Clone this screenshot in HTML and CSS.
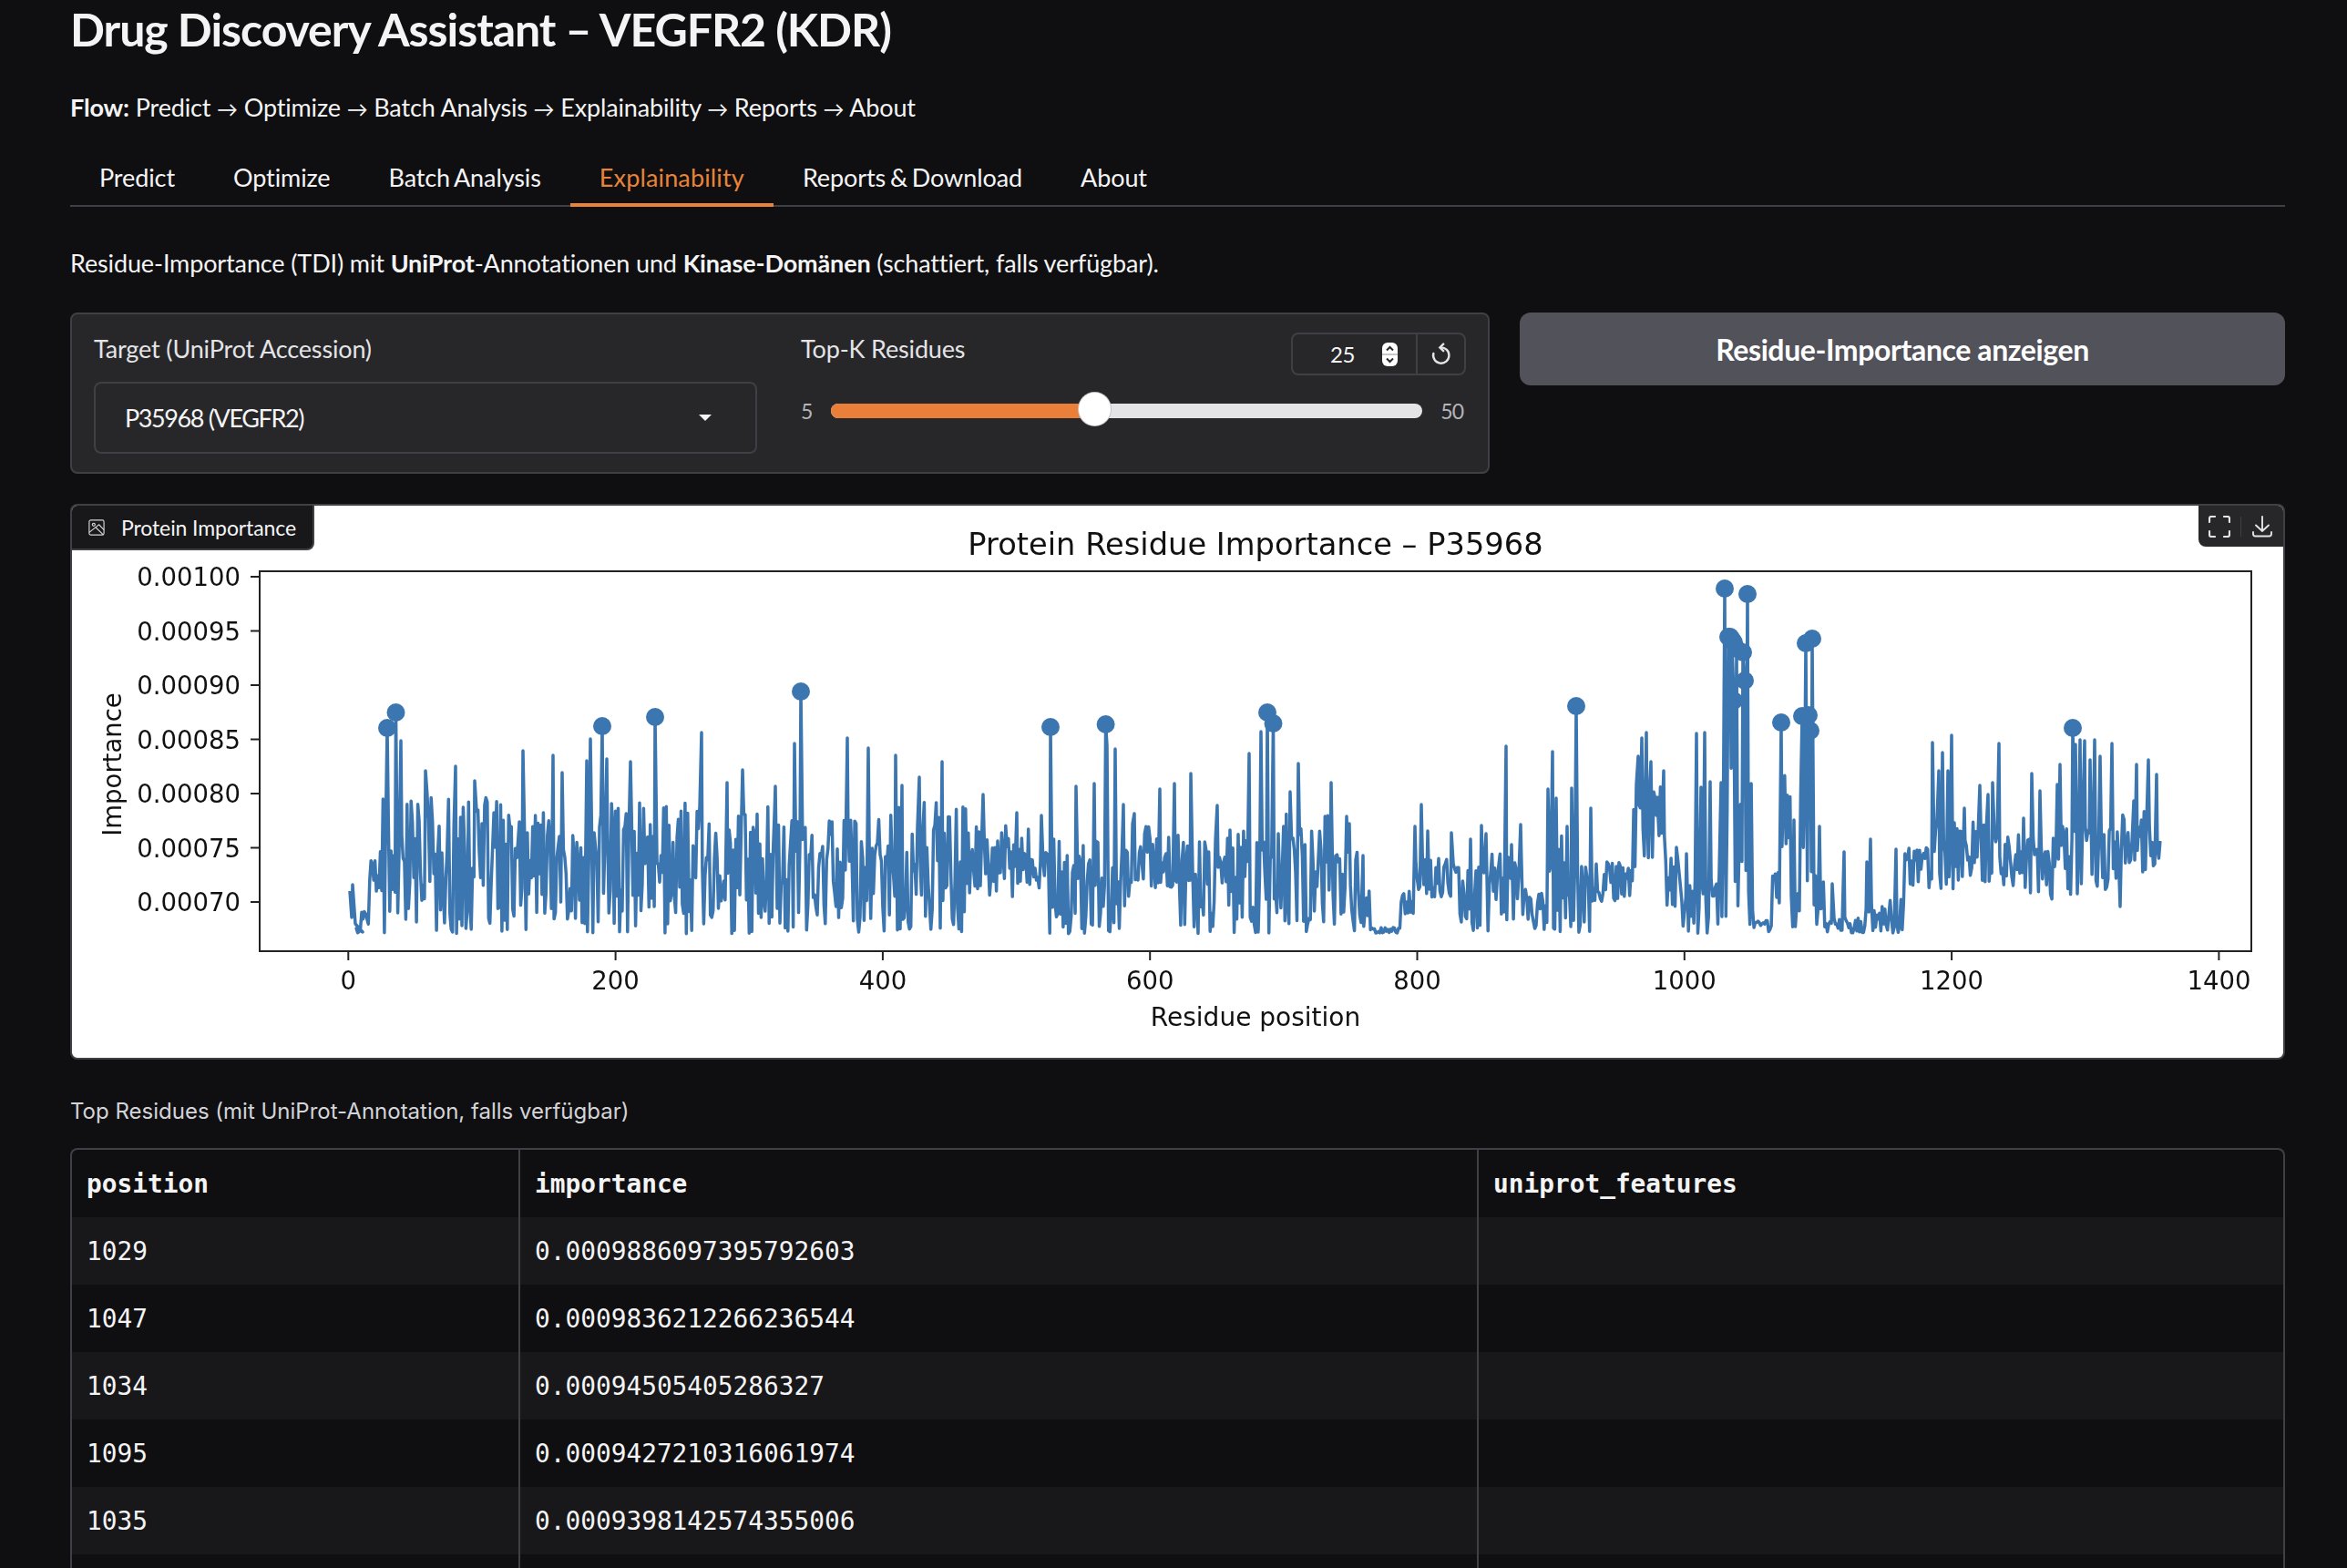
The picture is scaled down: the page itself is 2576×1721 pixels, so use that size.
FILE: index.html
```html
<!DOCTYPE html>
<html lang="en">
<head>
    <meta charset="UTF-8">
    <title>Drug Discovery Assistant</title>
    <link rel="stylesheet" href="styles.css">
</head>
<body>
    <div class="container">
        <h1>Drug Discovery Assistant – VEGFR2 (KDR)</h1>
        <p class="flow"><strong>Flow:</strong> Predict <span class="arrow">→</span> Optimize <span class="arrow">→</span> Batch Analysis <span class="arrow">→</span> Explainability <span class="arrow">→</span> Reports <span class="arrow">→</span> About</p>

        <nav class="tabs">
            <span class="tab">Predict</span>
            <span class="tab">Optimize</span>
            <span class="tab">Batch Analysis</span>
            <span class="tab selected">Explainability</span>
            <span class="tab">Reports &amp; Download</span>
            <span class="tab">About</span>
        </nav>

        <p class="intro">Residue-Importance (TDI) mit <strong>UniProt</strong>-Annotationen und <strong>Kinase-Domänen</strong> (schattiert, falls verfügbar).</p>

        <div class="controls">
            <div class="panel">
                <div class="field target-field">
                    <span class="field-label">Target (UniProt Accession)</span>
                    <div class="select">
                        <span>P35968 (VEGFR2)</span>
                        <span class="caret"></span>
                    </div>
                </div>
                <div class="field topk-field">
                    <div class="topk-head">
                        <span class="field-label">Top-K Residues</span>
                        <div class="number-box">
                            <span class="number-value">25</span>
                            <span class="spinner">
                                <svg viewBox="0 0 17 26" width="17" height="26">
                                    <rect x="0" y="0" width="17" height="26" rx="6" fill="#fff"/>
                                    <rect x="0" y="12" width="17" height="2" fill="#c8c8cc"/>
                                    <path d="M5 8.5 L8.5 5 L12 8.5 M5 17.5 L8.5 21 L12 17.5" fill="none" stroke="#27272a" stroke-width="2"/>
                                </svg>
                            </span>
                            <span class="reset">
                                <svg viewBox="0 0 24 24" width="26" height="26" fill="none" stroke="#e4e4e7" stroke-width="2.2" stroke-linecap="round">
                                    <path d="M11 5 A8 8 0 1 1 4 11"/>
                                    <path d="M14 1.5 L10.5 5 L14 8.5"/>
                                </svg>
                            </span>
                        </div>
                    </div>
                    <div class="slider-row">
                        <span class="slider-end">5</span>
                        <div class="slider">
                            <div class="slider-fill" style="width: 44.6%"></div>
                            <div class="slider-thumb" style="left: 44.6%"></div>
                        </div>
                        <span class="slider-end slider-max">50</span>
                    </div>
                </div>
            </div>
            <button class="primary">Residue-Importance anzeigen</button>
        </div>

        <div class="plot-card">
            <div class="plot-label">
                <svg viewBox="0 0 20 20" width="18" height="18" fill="none" stroke="#d4d4d8" stroke-width="1.3">
                    <rect x="1" y="1" width="18" height="18" rx="2"/>
                    <circle cx="6.5" cy="6.5" r="1.7"/>
                    <path d="M1 16 L13 6.5 L19 13 M9 10 L18.5 19"/>
                </svg>
                <span>Protein Importance</span>
            </div>
            <div class="plot-tools">
                <span class="tool">
                    <svg viewBox="0 0 24 24" width="24" height="24" fill="none" stroke="#e4e4e7" stroke-width="2.2" stroke-linecap="round">
                        <path d="M7 1 H3 Q1 1 1 3 V7 M17 1 H21 Q23 1 23 3 V7 M7 23 H3 Q1 23 1 21 V17 M17 23 H21 Q23 23 23 21 V17"/>
                    </svg>
                </span>
                <span class="tool-divider"></span>
                <span class="tool">
                    <svg viewBox="0 0 24 24" width="24" height="24" fill="none" stroke="#e4e4e7" stroke-width="1.9" stroke-linecap="round">
                        <path d="M12 1 V17 M5 10.5 L12 17 L19 10.5 M2 18 V20 Q2 22.5 4.5 22.5 H19.5 Q22 22.5 22 20 V18"/>
                    </svg>
                </span>
            </div>
            <svg id="chart" class="chart" viewBox="79 555 2426 606"></svg>
        </div>

        <p class="table-title">Top Residues (mit UniProt-Annotation, falls verfügbar)</p>

        <div class="table-wrap">
            <table>
                <thead>
                    <tr>
                        <th class="col-pos">position</th>
                        <th class="col-imp">importance</th>
                        <th>uniprot_features</th>
                    </tr>
                </thead>
                <tbody>
                    <tr><td>1029</td><td>0.0009886097395792603</td><td></td></tr>
                    <tr><td>1047</td><td>0.0009836212266236544</td><td></td></tr>
                    <tr><td>1034</td><td>0.00094505405286327</td><td></td></tr>
                    <tr><td>1095</td><td>0.0009427210316061974</td><td></td></tr>
                    <tr><td>1035</td><td>0.0009398142574355006</td><td></td></tr>
                    <tr><td>&nbsp;</td><td></td><td></td></tr>
                </tbody>
            </table>
        </div>
    </div>

    <script src="chart.js"></script>
</body>
</html>
```

FILE: styles.css
```css
html, body {
    height: 1721px;
    overflow: hidden;
}

body {
    margin: 0;
    background-color: #0f0f11;
    color: #f4f4f5;
    font-family: 'Lato', 'Noto Sans', sans-serif;
}

.container {
    padding: 0 68px 0 77px;
}

h1 {
    margin: 0;
    padding-top: 2px;
    height: 61px;
    font-size: 50px;
    line-height: 60px;
    font-weight: 700;
    letter-spacing: -1.03px;
}

.flow {
    margin: 38px 0 0;
    height: 34px;
    font-size: 27px;
    line-height: 34px;
    letter-spacing: -0.15px;
}

.arrow {
    font-size: 23px;
    line-height: 0;
}

strong {
    font-weight: 700;
}

.tabs {
    display: flex;
    margin-top: 41px;
    height: 49px;
    border-bottom: 2px solid #3f3f46;
}

.tab {
    padding: 0 32px;
    font-size: 27px;
    line-height: 38px;
    letter-spacing: -0.1px;
    word-spacing: -2px;
    height: 46px;
    box-sizing: border-box;
}

.tab.selected {
    color: #e8833a;
    border-bottom: 4px solid #e8833a;
    height: 51px;
    letter-spacing: 0.15px;
}

.intro {
    margin: 45px 0 0;
    font-size: 27px;
    line-height: 34px;
    letter-spacing: -0.13px;
}

.controls {
    display: flex;
    align-items: flex-start;
    gap: 33px;
    margin-top: 37px;
}

.panel {
    display: flex;
    width: 1558px;
    height: 177px;
    box-sizing: border-box;
    background-color: #27272a;
    border: 2px solid #3f3f46;
    border-radius: 8px;
    padding: 20px 24px 0 24px;
    gap: 48px;
}

.field {
    display: flex;
    flex-direction: column;
}

.target-field {
    width: 728px;
}

.topk-field {
    flex: 1;
}

.field-label {
    font-size: 27px;
    line-height: 36px;
    letter-spacing: -0.15px;
    color: #e4e4e7;
}

.select {
    display: flex;
    align-items: center;
    justify-content: space-between;
    margin-top: 18px;
    height: 79px;
    box-sizing: border-box;
    border: 2px solid #3f3f46;
    border-radius: 8px;
    padding: 0 48px 0 32px;
    font-size: 27px;
    letter-spacing: -1.4px;
}

.caret {
    width: 0;
    height: 0;
    border-left: 7px solid transparent;
    border-right: 7px solid transparent;
    border-top: 7px solid #f4f4f5;
}

.topk-head {
    display: flex;
    justify-content: space-between;
    align-items: flex-start;
}

.number-box {
    display: flex;
    align-items: center;
    width: 192px;
    height: 47px;
    box-sizing: border-box;
    border: 2px solid #3f3f46;
    border-radius: 8px;
}

.number-value {
    width: 68px;
    text-align: right;
    font-size: 24px;
    letter-spacing: -0.4px;
}

.spinner {
    display: flex;
    margin-left: 30px;
    width: 37px;
}

.reset {
    display: flex;
    align-items: center;
    justify-content: center;
    flex: 1;
    height: 100%;
    border-left: 2px solid #3f3f46;
}

.slider-row {
    display: flex;
    align-items: center;
    gap: 20px;
    margin-top: 25px;
}

.slider-end {
    font-size: 23px;
    color: #b4b4bb;
}

.slider-max {
    margin-right: 3px;
    letter-spacing: -1px;
}

.slider {
    position: relative;
    flex: 1;
    height: 16px;
    border-radius: 8px;
    background-color: #e4e4e7;
}

.slider-fill {
    height: 100%;
    border-radius: 8px 0 0 8px;
    background-color: #e97f38;
}

.slider-thumb {
    position: absolute;
    top: -12px;
    width: 35px;
    height: 36px;
    margin-left: -18px;
    border-radius: 50%;
    background-color: #fff;
    box-shadow: 0 0 0 1px #c4c4c8;
}

.primary {
    flex: 1;
    height: 80px;
    border: none;
    border-radius: 12px;
    background-color: #52525b;
    color: #fff;
    font-family: inherit;
    font-size: 32px;
    font-weight: 700;
    letter-spacing: -0.4px;
}

.plot-card {
    position: relative;
    margin-top: 33px;
    height: 610px;
    box-sizing: border-box;
    background-color: #fff;
    border: 2px solid #3f3f46;
    border-radius: 8px;
    overflow: hidden;
}

.plot-label {
    position: absolute;
    top: 0;
    left: 0;
    display: flex;
    align-items: center;
    gap: 18px;
    width: 266px;
    height: 49px;
    box-sizing: border-box;
    padding-left: 18px;
    background-color: #18181b;
    border-right: 2px solid #3f3f46;
    border-bottom: 2px solid #3f3f46;
    border-bottom-right-radius: 8px;
    font-size: 23px;
    letter-spacing: -0.1px;
}

.plot-tools {
    position: absolute;
    top: 0;
    right: 0;
    display: flex;
    align-items: center;
    height: 45px;
    background-color: #27272a;
    border-bottom-left-radius: 8px;
}

.tool {
    display: flex;
    align-items: center;
    justify-content: center;
    width: 46px;
    height: 100%;
}

.tool-divider {
    width: 1px;
    height: 22px;
    background-color: #3f3f46;
}

.chart {
    display: block;
    width: 2426px;
    height: 606px;
    filter: blur(0.5px);
}

.chart text {
    font-family: 'DejaVu Sans', sans-serif;
    fill: #111;
}

.table-title {
    margin: 40px 0 0;
    font-family: 'Inter', sans-serif;
    font-size: 24px;
    line-height: 34px;
    color: #d4d4d8;
}

.table-wrap {
    margin-top: 23px;
    border: 2px solid #3f3f46;
    border-bottom: none;
    border-radius: 8px 8px 0 0;
    overflow: hidden;
}

table {
    width: 100%;
    border-collapse: collapse;
    table-layout: fixed;
    font-family: 'DejaVu Sans Mono', monospace;
    font-size: 27.8px;
}

.col-pos {
    width: 491px;
}

.col-imp {
    width: 1052px;
}

th, td {
    box-sizing: border-box;
    padding: 0 16px;
    height: 74px;
    text-align: left;
    border-right: 2px solid #3f3f46;
}

th:last-child, td:last-child {
    border-right: none;
}

th {
    font-weight: 700;
    color: #f4f4f5;
}

tbody tr:nth-child(odd) {
    background-color: #18181b;
}
```

FILE: chart.js
```js
// x and y in page pixels, so the numbers can be read straight off the picture
const xZero = 382.3;
const xPerResidue = 1.4665;
const total = 1356;
const floorY = 1025;
const lineColor = '#3b76b0';

const chart = document.getElementById('chart');

// right edge of region, middle, reach up, reach down
const regions = [
    [405, 1015, 15, 10], [420, 950, 30, 30], [470, 940, 70, 85], [560, 945, 70, 80],
    [700, 950, 70, 75], [870, 950, 70, 75], [960, 955, 55, 70], [1063, 950, 70, 75],
    [1130, 940, 35, 45], [1150, 955, 20, 25], [1240, 975, 55, 50], [1295, 940, 40, 35],
    [1363, 975, 60, 50], [1403, 970, 60, 55], [1460, 960, 70, 65], [1490, 985, 60, 40],
    [1503, 990, 15, 30], [1537, 1021, 3, 3], [1553, 990, 12, 15], [1593, 955, 30, 30],
    [1637, 985, 40, 40], [1670, 965, 30, 45], [1700, 1000, 25, 25], [1715, 960, 50, 65],
    [1747, 975, 40, 50], [1793, 965, 20, 25], [1827, 900, 40, 55], [1847, 965, 25, 30],
    [1890, 990, 30, 35], [1925, 900, 60, 120], [1945, 1015, 5, 8], [1955, 970, 15, 30],
    [1965, 880, 30, 50], [1975, 1000, 20, 25], [1990, 880, 30, 90], [2003, 985, 30, 40],
    [2047, 1015, 10, 10], [2090, 1005, 20, 20], [2120, 950, 20, 25], [2146, 920, 30, 60],
    [2193, 925, 25, 45], [2260, 945, 30, 45], [2322, 930, 30, 55], [2380, 925, 35, 40]
];

// tall spikes that stand out of the noise
const spikes = [
    [440, 813], [467, 846], [500, 841], [521, 857], [574, 824], [607, 829], [617, 848],
    [644, 835], [648, 811], [666, 833], [692, 836], [770, 804], [798, 859], [815, 845],
    [851, 863], [872, 816], [930, 810], [953, 821], [983, 829], [990, 862], [1009, 853],
    [1034, 836], [1079, 872], [1116, 892], [1143, 895], [1181, 863], [1201, 860], [1215, 818],
    [1224, 822], [1233, 883], [1245, 893], [1273, 866], [1289, 860], [1307, 849], [1336, 884],
    [1350, 911], [1371, 827], [1384, 803], [1416, 869], [1425, 838], [1461, 859], [1478, 896],
    [1481, 904], [1496, 939], [1553, 907], [1560, 883], [1567, 912], [1593, 914], [1614, 921],
    [1626, 906], [1631, 915], [1653, 819], [1659, 927], [1669, 905], [1699, 866], [1704, 825],
    [1708, 876], [1720, 907], [1725, 865], [1746, 887], [1798, 830], [1802, 810], [1807, 804],
    [1812, 836], [1819, 875], [1826, 846], [1840, 930], [1851, 937], [1862, 805], [1867, 864],
    [1871, 804], [1877, 858], [1889, 859], [1969, 900], [1997, 907], [2011, 970], [2024, 935],
    [2049, 946], [2053, 921], [2081, 932], [2121, 815], [2128, 846], [2132, 826], [2138, 846],
    [2142, 807], [2156, 887], [2173, 862], [2182, 872], [2187, 859], [2194, 816], [2221, 898],
    [2230, 849], [2239, 868], [2258, 861], [2261, 839], [2278, 817], [2283, 812], [2288, 813],
    [2294, 834], [2299, 812], [2305, 830], [2318, 816], [2327, 995], [2342, 879], [2345, 839],
    [2358, 834], [2367, 850]
];

// the top-k residues
const markers = [
    [425, 799], [434.5, 782], [661, 797], [719, 787], [879, 759], [1153, 798], [1213.6, 795],
    [1391, 782], [1397.5, 794], [1730, 775], [1893, 646], [1918, 652], [1897, 699], [1899, 699],
    [1901, 702], [1903, 705], [1906, 712], [1913, 716], [1915, 747], [1903, 769], [1955, 793],
    [1978, 786], [1982, 706], [1985, 785], [1987, 802], [1989, 701], [2275, 799]
];

// fixed seed, the chart has to look the same on every load
let seed = 20240611;
function random() {
    seed = (seed + 0x6d2b79f5) | 0;
    let t = Math.imul(seed ^ (seed >>> 15), 1 | seed);
    t = (t + Math.imul(t ^ (t >>> 7), 61 | t)) ^ t;
    return ((t ^ (t >>> 14)) >>> 0) / 4294967296;
}

function noisyY(x, i) {
    const region = regions.find(r => x <= r[0]) || regions[regions.length - 1];
    const goUp = i % 2 === 0 ? random() < 0.7 : random() < 0.3;
    const y = goUp
        ? region[1] - region[2] * random()
        : region[1] + region[3] * Math.pow(random(), 0.6);
    return Math.min(y, floorY);
}

function buildLine() {
    const points = [];
    for (let i = 1; i <= total; i++) {
        points.push([xZero + i * xPerResidue, 0]);
        points[i - 1][1] = noisyY(points[i - 1][0], i);
    }
    [...spikes, ...markers].forEach(([x, y]) => {
        const i = Math.round((x - xZero) / xPerResidue) - 1;
        points[i] = [x, y];
    });
    // the quiet start of the trace
    [[384, 978], [386, 1007], [387, 971], [390, 1014], [398, 1023]].forEach((p, i) => {
        points[i] = p;
    });
    points[points.length - 1][1] = 923;
    return points.map(p => p[0].toFixed(1) + ',' + p[1].toFixed(1)).join(' ');
}

function svgEl(name, attrs, text) {
    const el = document.createElementNS('http://www.w3.org/2000/svg', name);
    Object.keys(attrs).forEach(key => el.setAttribute(key, attrs[key]));
    if (text) el.textContent = text;
    chart.appendChild(el);
    return el;
}

function tick(x1, y1, x2, y2) {
    svgEl('line', { x1, y1, x2, y2, stroke: '#222', 'stroke-width': 2 });
}

function drawAxes() {
    [['0.00100', 633], ['0.00095', 692.5], ['0.00090', 752], ['0.00085', 811.5],
     ['0.00080', 871], ['0.00075', 930.5], ['0.00070', 990]].forEach(([label, y]) => {
        tick(275, y, 285, y);
        svgEl('text', { x: 264, y: y + 10, 'font-size': 27.5, 'text-anchor': 'end' }, label);
    });
    for (let n = 0; n <= 1400; n += 200) {
        const x = xZero + n * xPerResidue;
        tick(x, 1044, x, 1054);
        svgEl('text', { x, y: 1086, 'font-size': 27.5, 'text-anchor': 'middle' }, String(n));
    }
    svgEl('text', { x: 1378, y: 609, 'font-size': 33.7, 'text-anchor': 'middle' }, 'Protein Residue Importance – P35968');
    svgEl('text', { x: 1378, y: 1126, 'font-size': 28, 'text-anchor': 'middle' }, 'Residue position');
    svgEl('text', { x: 0, y: 0, 'font-size': 27.5, 'text-anchor': 'middle', transform: 'translate(133 839) rotate(-90)' }, 'Importance');
    svgEl('rect', { x: 285, y: 627, width: 2186, height: 417, fill: 'none', stroke: '#222', 'stroke-width': 2 });
}

function drawTrace() {
    svgEl('polyline', { points: buildLine(), fill: 'none', stroke: lineColor, 'stroke-width': 3.5, 'stroke-linejoin': 'round' });
    markers.forEach(([cx, cy]) => {
        svgEl('circle', { cx, cy, r: 10, fill: lineColor });
    });
}

drawTrace();
drawAxes();
```
